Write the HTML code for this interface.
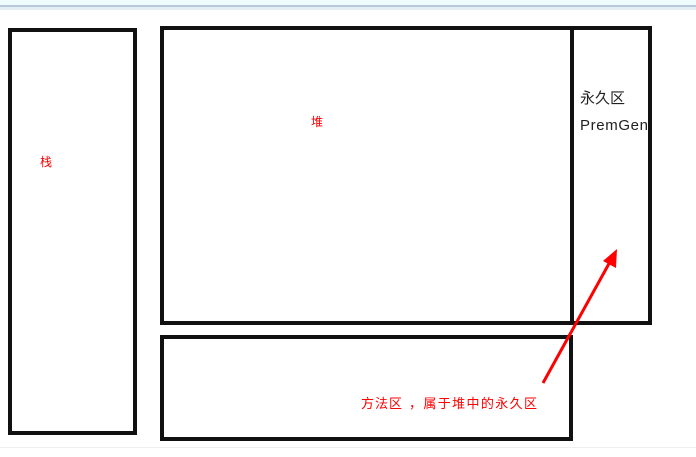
<html><body style="margin:0;width:696px;height:457px;background:#fff;overflow:hidden;position:relative">
<div style="position:absolute;left:0;top:0;width:696px;height:5px;background:#eefcff"></div>
<div style="position:absolute;left:0;top:5px;width:696px;height:2px;background:#b9c9dc"></div>
<div style="position:absolute;left:0;top:7px;width:696px;height:3px;background:#e4ecf4"></div>
<div style="position:absolute;left:0;top:447px;width:696px;height:1px;background:#eee"></div>
<svg width="696" height="457" style="position:absolute;left:0;top:0">
<g fill="none" stroke="#111" stroke-width="4">
<rect x="10" y="30" width="125" height="403"/>
<rect x="162" y="28" width="410" height="295"/>
<rect x="572" y="28" width="78" height="295"/>
<rect x="162" y="337" width="409" height="102"/>
</g>
<line x1="543" y1="383" x2="611" y2="260" stroke="#f00" stroke-width="3"/>
<polygon points="617,249 616,268 603,261" fill="#f00"/>
<g font-family="'Liberation Sans','Noto Sans CJK SC',sans-serif">
<text x="40" y="166" font-size="12" fill="#f00">栈</text>
<text x="311" y="126" font-size="12" fill="#f00">堆</text>
<text x="580" y="103" font-size="15" fill="#222">永久区</text>
<text x="580" y="130" font-size="15" fill="#222" textLength="68">PremGen</text>
<text x="361" y="408" font-size="13" fill="#f00" textLength="41">方法区</text>
<text x="409" y="408" font-size="13" fill="#f00" textLength="128">，属于堆中的永久区</text>
</g>
</svg>
</body></html>
